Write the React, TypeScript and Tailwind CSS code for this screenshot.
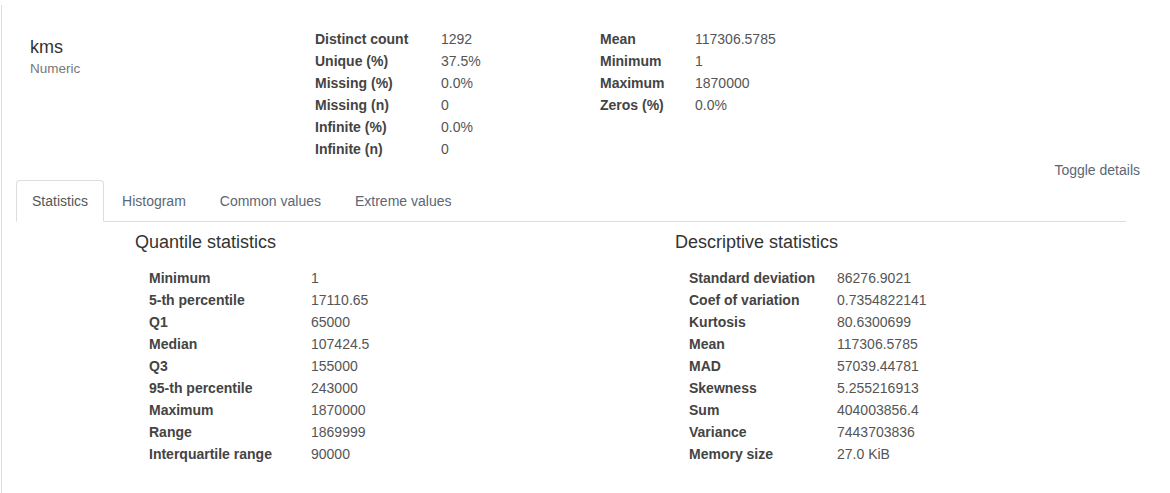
const summary: [string, string][] = [
  ["Distinct count", "1292"],
  ["Unique (%)", "37.5%"],
  ["Missing (%)", "0.0%"],
  ["Missing (n)", "0"],
  ["Infinite (%)", "0.0%"],
  ["Infinite (n)", "0"],
];

const summary2: [string, string][] = [
  ["Mean", "117306.5785"],
  ["Minimum", "1"],
  ["Maximum", "1870000"],
  ["Zeros (%)", "0.0%"],
];

const quantiles: [string, string][] = [
  ["Minimum", "1"],
  ["5-th percentile", "17110.65"],
  ["Q1", "65000"],
  ["Median", "107424.5"],
  ["Q3", "155000"],
  ["95-th percentile", "243000"],
  ["Maximum", "1870000"],
  ["Range", "1869999"],
  ["Interquartile range", "90000"],
];

const descriptive: [string, string][] = [
  ["Standard deviation", "86276.9021"],
  ["Coef of variation", "0.7354822141"],
  ["Kurtosis", "80.6300699"],
  ["Mean", "117306.5785"],
  ["MAD", "57039.44781"],
  ["Skewness", "5.255216913"],
  ["Sum", "404003856.4"],
  ["Variance", "7443703836"],
  ["Memory size", "27.0 KiB"],
];

const tabs = ["Statistics", "Histogram", "Common values", "Extreme values"];

type StatTableProps = {
  rows: [string, string][];
  labelWidth: string;
};

function StatTable({ rows, labelWidth }: StatTableProps) {
  return (
    <div className="flex flex-col">
      {rows.map(([label, value]) => (
        <div key={label} className="flex h-[22px] items-center">
          <span className={`${labelWidth} font-bold text-[#444]`}>{label}</span>
          <span className="text-[#555]">{value}</span>
        </div>
      ))}
    </div>
  );
}

function App() {
  return (
    <div
      className="ml-px mt-[5px] h-[488px] border-l border-[#dcdcdc] bg-white text-[14px] leading-[20px]"
      style={{ fontFamily: '"Liberation Sans", Arial, sans-serif' }}
    >
      {/* Variable header */}
      <div className="flex pt-[23px]">
        <div className="w-[313px] pl-[28px] pt-[9px]">
          <div className="text-[18px] leading-[20px] text-[#333]">kms</div>
          <div className="mt-[3px] text-[13.5px] leading-[18px] text-[#777]">Numeric</div>
        </div>
        <div className="w-[285px]">
          <StatTable rows={summary} labelWidth="w-[126px]" />
        </div>
        <div>
          <StatTable rows={summary2} labelWidth="w-[95px]" />
        </div>
      </div>

      <div className="flex h-[20px] justify-end pr-[30px]">
        <a className="text-[#5b6776]">Toggle details</a>
      </div>

      {/* Tabs */}
      <div className="ml-[14px] mr-[44px]">
        <ul className="flex border-b border-[#ddd]">
          {tabs.map((tab, i) => (
            <li key={tab} className="-mb-px mr-[2px]">
              <a
                className={`block rounded-t-[4px] border px-[15px] py-[10px] ${
                  i === 0
                    ? "border-[#ddd] border-b-white bg-white text-[#555]"
                    : "border-transparent text-[#5b6776]"
                }`}
              >
                {tab}
              </a>
            </li>
          ))}
        </ul>

        <div className="grid grid-cols-[540px_540px] pl-[119px] pt-[10px]">
          <div>
            <h4 className="text-[18px] leading-[20px] text-[#333]">Quantile statistics</h4>
            <div className="pl-[14px] pt-[15px]">
              <StatTable rows={quantiles} labelWidth="w-[162px]" />
            </div>
          </div>
          <div>
            <h4 className="text-[18px] leading-[20px] text-[#333]">Descriptive statistics</h4>
            <div className="pl-[14px] pt-[15px]">
              <StatTable rows={descriptive} labelWidth="w-[148px]" />
            </div>
          </div>
        </div>
      </div>
    </div>
  );
}

export default App;
